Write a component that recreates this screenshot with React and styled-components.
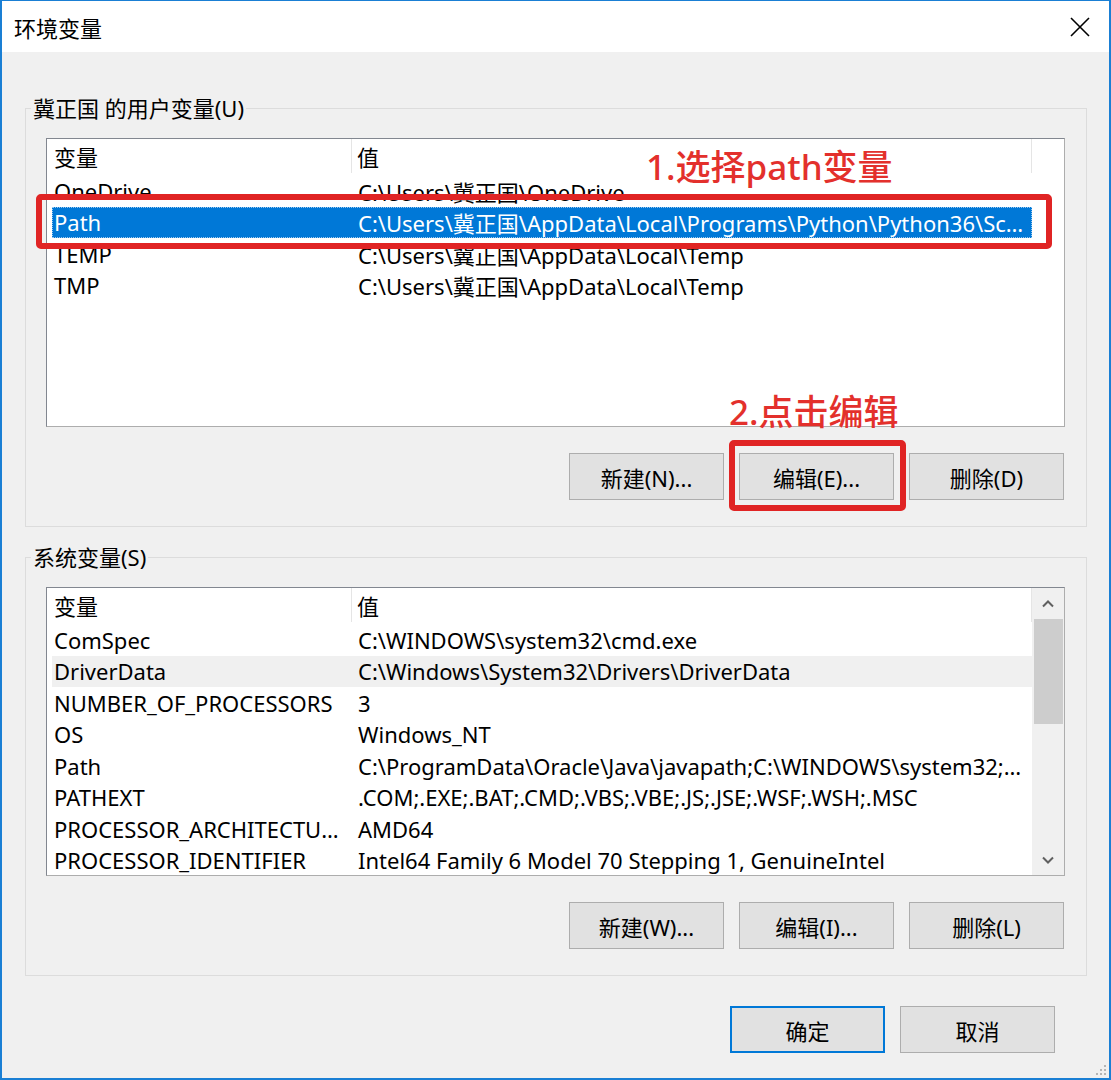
import React from 'react';
import styled, { createGlobalStyle } from 'styled-components';

const GlobalStyle = createGlobalStyle`
  body {
    margin: 0;
    background: #fff;
    font-family: "Noto Sans", "Noto Sans CJK SC", sans-serif;
  }
`;

const userVars = [
  { name: 'OneDrive', value: 'C:\\Users\\冀正国\\OneDrive' },
  { name: 'Path', value: 'C:\\Users\\冀正国\\AppData\\Local\\Programs\\Python\\Python36\\Scripts\\;C:\\Users', selected: true },
  { name: 'TEMP', value: 'C:\\Users\\冀正国\\AppData\\Local\\Temp' },
  { name: 'TMP', value: 'C:\\Users\\冀正国\\AppData\\Local\\Temp' },
];

const sysVars = [
  { name: 'ComSpec', value: 'C:\\WINDOWS\\system32\\cmd.exe' },
  { name: 'DriverData', value: 'C:\\Windows\\System32\\Drivers\\DriverData', hover: true },
  { name: 'NUMBER_OF_PROCESSORS', value: '3' },
  { name: 'OS', value: 'Windows_NT' },
  { name: 'Path', value: 'C:\\ProgramData\\Oracle\\Java\\javapath;C:\\WINDOWS\\system32;C:\\WINDOWS' },
  { name: 'PATHEXT', value: '.COM;.EXE;.BAT;.CMD;.VBS;.VBE;.JS;.JSE;.WSF;.WSH;.MSC' },
  { name: 'PROCESSOR_ARCHITECTURE', value: 'AMD64' },
  { name: 'PROCESSOR_IDENTIFIER', value: 'Intel64 Family 6 Model 70 Stepping 1, GenuineIntel' },
];

const App = () => {
  return (
    <Page>
      <GlobalStyle />
      <Window>
        <TitleBar>
          <Title>环境变量</Title>
          <CloseButton>
            <svg width="20" height="20" viewBox="0 0 20 20">
              <path d="M1 1 L19 19 M19 1 L1 19" stroke="#000" strokeWidth="1.6" fill="none" />
            </svg>
          </CloseButton>
        </TitleBar>

        <Body>
          <Group>
            <Legend>冀正国 的用户变量(U)</Legend>
            <VarList rows={userVars} />
            <ButtonRow>
              <Button>新建(N)...</Button>
              <Button>编辑(E)...</Button>
              <Button>删除(D)</Button>
            </ButtonRow>
          </Group>

          <Group $second>
            <Legend>系统变量(S)</Legend>
            <VarList rows={sysVars} scroll />
            <ButtonRow>
              <Button>新建(W)...</Button>
              <Button>编辑(I)...</Button>
              <Button>删除(L)</Button>
            </ButtonRow>
          </Group>

          <Footer>
            <Button $primary>确定</Button>
            <Button>取消</Button>
          </Footer>
        </Body>

        <Grip>
          <svg width="14" height="14" viewBox="0 0 14 14">
            <rect x="11" y="3" width="2" height="2" fill="#b5b5b5" />
            <rect x="7" y="7" width="2" height="2" fill="#b5b5b5" />
            <rect x="11" y="7" width="2" height="2" fill="#b5b5b5" />
            <rect x="3" y="11" width="2" height="2" fill="#b5b5b5" />
            <rect x="7" y="11" width="2" height="2" fill="#b5b5b5" />
            <rect x="11" y="11" width="2" height="2" fill="#b5b5b5" />
          </svg>
        </Grip>
      </Window>

      <RedText $x={646} $y={145}>1.选择path变量</RedText>
      <RedBox $x={36} $y={194} $w={1016} $h={55} />
      <RedText $x={729} $y={390}>2.点击编辑</RedText>
      <RedBox $x={729} $y={440} $w={177} $h={71} />
    </Page>
  );
};

const VarList = ({ rows, scroll }) => (
  <ListBox>
    <Rows>
      <HeaderRow>
        <HeadCell>变量</HeadCell>
        <HeadCell $value>值</HeadCell>
      </HeaderRow>
      {rows.map((r) => (
        <Row key={r.name + r.value} $selected={r.selected} $hover={r.hover}>
          <NameCell>{r.name}</NameCell>
          <ValueCell>{r.value}</ValueCell>
        </Row>
      ))}
    </Rows>
    {scroll && (
      <ScrollBar>
        <ScrollArrow>
          <svg width="12" height="8" viewBox="0 0 12 8">
            <path d="M1 6.5 L6 1.5 L11 6.5" stroke="#606060" strokeWidth="2" fill="none" />
          </svg>
        </ScrollArrow>
        <Thumb />
        <Track />
        <ScrollArrow>
          <svg width="12" height="8" viewBox="0 0 12 8">
            <path d="M1 1.5 L6 6.5 L11 1.5" stroke="#606060" strokeWidth="2" fill="none" />
          </svg>
        </ScrollArrow>
      </ScrollBar>
    )}
  </ListBox>
);

const Page = styled.div`
  position: relative;
  width: 1111px;
  height: 1080px;
`;

const Window = styled.div`
  position: relative;
  box-sizing: border-box;
  width: 1111px;
  height: 1080px;
  border: 2px solid #1a7fd4;
  border-top-width: 1px;
  background: #f0f0f0;
  display: flex;
  flex-direction: column;
`;

const TitleBar = styled.div`
  height: 51px;
  background: #fff;
  display: flex;
  align-items: center;
  justify-content: space-between;
  padding-left: 12px;
`;

const Title = styled.div`
  font-size: 22px;
  color: #000;
`;

const CloseButton = styled.div`
  width: 58px;
  height: 51px;
  display: flex;
  align-items: center;
  justify-content: center;
`;

const Body = styled.div`
  flex: 1;
  display: flex;
  flex-direction: column;
  padding: 42px 22px 0 23px;
`;

const Group = styled.fieldset`
  margin: ${(p) => (p.$second ? '16px' : '0')} 0 0 0;
  border: 1px solid #dcdcdc;
  padding: 0 21px 26px 20px;
  min-width: 0;
`;

const Legend = styled.legend`
  font-size: 22px;
  line-height: 28px;
  padding: 0 2px;
  margin-left: -15px;
  color: #000;
`;

const ListBox = styled.div`
  margin-top: 16px;
  box-sizing: border-box;
  height: 289px;
  background: #fff;
  border: 1px solid #adadad;
  border-top-color: #828790;
  border-left-color: #828790;
  display: flex;
  overflow: hidden;
`;

const Rows = styled.div`
  flex: 1;
  padding-left: 5px;
  min-width: 0;
`;

const HeaderRow = styled.div`
  display: grid;
  grid-template-columns: 300px 680px;
  width: 980px;
  height: 36px;
  align-items: stretch;
`;

const HeadCell = styled.div`
  display: flex;
  align-items: center;
  padding-left: ${(p) => (p.$value ? '5px' : '2px')};
  border-right: 1px solid #e5e5e5;
  font-size: 22px;
  color: #000;
  margin-bottom: 2px;
`;

const Row = styled.div`
  display: grid;
  grid-template-columns: 300px 680px;
  width: 980px;
  height: 31.5px;
  align-items: center;
  box-sizing: border-box;
  font-size: 22px;
  color: ${(p) => (p.$selected ? '#fff' : '#000')};
  background: ${(p) => (p.$selected ? '#0078d7' : p.$hover ? '#f0f0f0' : 'transparent')};
  border: 1px dotted ${(p) => (p.$selected ? '#9cc9ef' : 'transparent')};
`;

const NameCell = styled.div`
  padding-left: 1px;
  padding-right: 10px;
  white-space: nowrap;
  overflow: hidden;
  text-overflow: ellipsis;
`;

const ValueCell = styled.div`
  padding-left: 5px;
  padding-right: 2px;
  white-space: nowrap;
  overflow: hidden;
  text-overflow: ellipsis;
`;

const ScrollBar = styled.div`
  width: 32px;
  background: #f0f0f0;
  display: flex;
  flex-direction: column;
  align-items: center;
`;

const ScrollArrow = styled.div`
  height: 31px;
  width: 100%;
  display: flex;
  align-items: center;
  justify-content: center;
`;

const Thumb = styled.div`
  width: 29px;
  height: 105px;
  background: #cdcdcd;
`;

const Track = styled.div`
  flex: 1;
`;

const ButtonRow = styled.div`
  display: flex;
  justify-content: flex-end;
  gap: 15px;
  margin-top: 26px;
  margin-right: 1px;
`;

const Button = styled.button`
  box-sizing: border-box;
  width: 155px;
  height: 47px;
  background: #e1e1e1;
  border: ${(p) => (p.$primary ? '2px solid #0078d7' : '1px solid #adadad')};
  font-family: inherit;
  font-size: 22px;
  color: #000;
  padding: 0;
`;

const Footer = styled.div`
  display: flex;
  justify-content: flex-end;
  gap: 15px;
  margin-top: 30px;
  padding-right: 32px;
`;

const Grip = styled.div`
  position: absolute;
  right: 2px;
  bottom: 2px;
  line-height: 0;
`;

const RedText = styled.div`
  position: absolute;
  left: ${(p) => p.$x}px;
  top: ${(p) => p.$y}px;
  font-size: 35px;
  line-height: 44px;
  font-weight: 500;
  color: #e3302c;
  white-space: nowrap;
`;

const RedBox = styled.div`
  position: absolute;
  box-sizing: border-box;
  left: ${(p) => p.$x}px;
  top: ${(p) => p.$y}px;
  width: ${(p) => p.$w}px;
  height: ${(p) => p.$h}px;
  border: 6px solid #e02424;
  border-radius: 5px;
`;

export default App;
